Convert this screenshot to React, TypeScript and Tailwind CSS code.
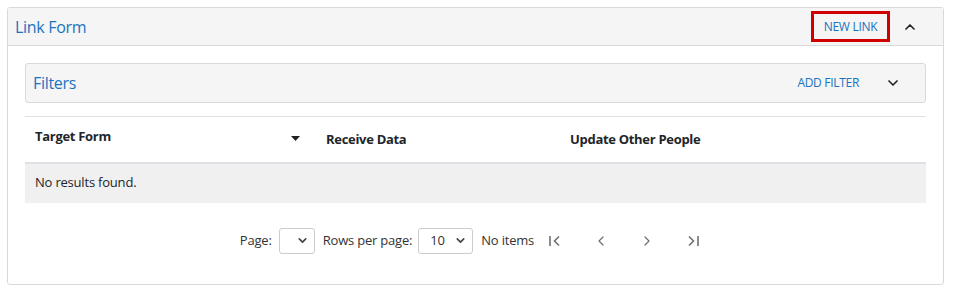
import { ChevronUp, ChevronDown, ChevronLeft, ChevronRight } from 'lucide-react';

const blue = 'text-[#1a73c0]';

function FirstIcon() {
  return (
    <svg width="16" height="16" viewBox="0 0 16 16" fill="none" stroke="#6f6f6f" strokeWidth="1.6">
      <path d="M3 3v10" />
      <path d="M12 3.5 7.5 8l4.5 4.5" />
    </svg>
  );
}

function LastIcon() {
  return (
    <svg width="16" height="16" viewBox="0 0 16 16" fill="none" stroke="#6f6f6f" strokeWidth="1.6">
      <path d="M13 3v10" />
      <path d="M4 3.5 8.5 8 4 12.5" />
    </svg>
  );
}

export default function App() {
  return (
    <div className="w-[953px] h-[293px] bg-white pt-[7px] pl-[7px]" style={{ fontFamily: '"Open Sans", "Noto Sans", sans-serif' }}>
      <div className="w-[937px] h-[278px] border border-[#d9d9d9] rounded-[3px] flex flex-col">
        {/* Header */}
        <div className="h-[38px] bg-[#f5f5f5] border-b border-[#d9d9d9] flex items-center pl-[7px] pr-[25px]">
          <h1 className={`text-[16px] ${blue} flex-1 tracking-[-0.3px]`}>Link Form</h1>
          <button className={`h-[31px] w-[79px] border-[3px] border-[#d00000] text-[12px] ${blue} flex items-center justify-center mr-[12px] tracking-[-0.3px]`}>
            NEW LINK
          </button>
          <ChevronUp size={16} strokeWidth={2.5} className="text-[#222]" />
        </div>

        {/* Body */}
        <div className="px-[17px] pt-[17px]">
          <div className="h-[40px] bg-[#f5f5f5] border border-[#d9d9d9] rounded-[3px] flex items-center pl-[7px] pr-[24px]">
            <span className={`text-[16px] ${blue} flex-1 tracking-[-0.3px]`}>Filters</span>
            <span className={`text-[12px] ${blue} mr-[26px] tracking-[-0.3px]`}>ADD FILTER</span>
            <ChevronDown size={16} strokeWidth={2.5} className="text-[#222]" />
          </div>

          <table className="w-full mt-[13px] border-collapse text-[13px] text-[#212529]">
            <thead>
              <tr className="h-[46px] border-t border-[#dee2e6] border-b-2 border-b-[#dee2e6]">
                <th className="w-[291px] text-left font-bold pl-[10px] pr-[16px] tracking-[-0.3px]">
                  <div className="flex items-center justify-between -mt-[6px]">
                    <span>Target Form</span>
                    <svg width="9" height="5" viewBox="0 0 9 5" className="mt-[5px]">
                      <path d="M0 0h9L4.5 5z" fill="#222" />
                    </svg>
                  </div>
                </th>
                <th className="w-[244px] text-left font-bold px-[10px] tracking-[-0.3px]">Receive Data</th>
                <th className="text-left font-bold px-[10px] tracking-[-0.3px]">Update Other People</th>
              </tr>
            </thead>
            <tbody>
              <tr className="h-[40px] bg-[#f0f0f0]">
                <td colSpan={3} className="px-[10px] tracking-[-0.2px]">No results found.</td>
              </tr>
            </tbody>
          </table>

          {/* Pagination */}
          <div className="flex items-center justify-center mt-[25px] text-[13px] text-[#333] tracking-[-0.2px] pr-[10px]">
            <span className="mr-[7px]">Page:</span>
            <div className="w-[36px] h-[26px] border border-[#ccc] rounded-[3px] flex items-center justify-end pr-[5px]">
              <ChevronDown size={13} strokeWidth={3} className="text-[#444]" />
            </div>
            <span className="ml-[8px] mr-[6px]">Rows per page:</span>
            <div className="w-[55px] h-[26px] border border-[#ccc] rounded-[3px] flex items-center justify-between pl-[11px] pr-[5px]">
              <span>10</span>
              <ChevronDown size={13} strokeWidth={3} className="text-[#444]" />
            </div>
            <span className="ml-[8px] mr-[13px]">No items</span>
            <div className="flex items-center gap-[30px]">
              <FirstIcon />
              <ChevronLeft size={16} strokeWidth={1.8} className="text-[#6f6f6f]" />
              <ChevronRight size={16} strokeWidth={1.8} className="text-[#6f6f6f]" />
              <LastIcon />
            </div>
          </div>
        </div>
      </div>
    </div>
  );
}
